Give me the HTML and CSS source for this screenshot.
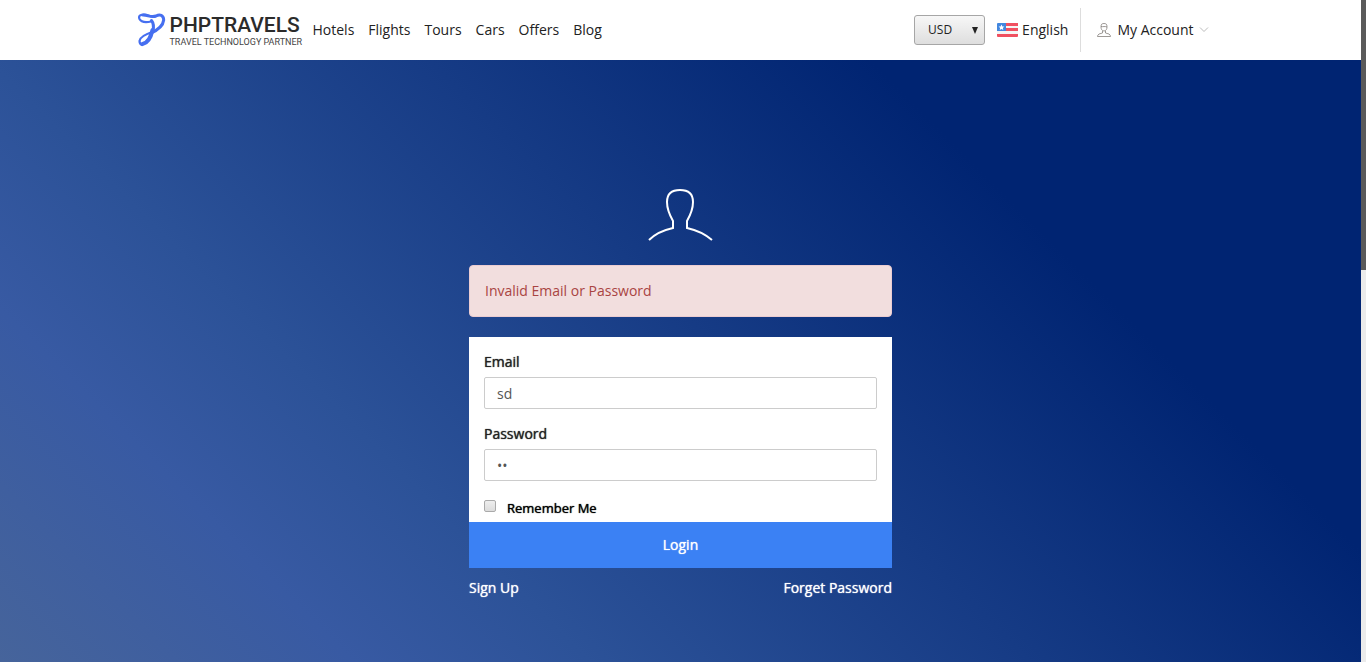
FILE: index.html
```html
<!DOCTYPE html>
<html lang="en">
<head>
<meta charset="utf-8">
<title>Login</title>
<link rel="stylesheet" href="styles.css">
</head>
<body>
<div class="page">
  <header class="header">
    <div class="header-inner">
      <a class="logo" href="#">
        <svg class="logo-mark" viewBox="0 0 28 34" aria-hidden="true">
          <g fill="none" stroke="#466ff0" stroke-linecap="round" stroke-linejoin="round">
            <path stroke-width="2.200" d="M13 8.500C8 9.500 3 9 1.500 6C0 2.500 3 1.500 6.500 1.600C11 2 14 5 18 3"/>
            <path stroke-width="3" d="M5 2C10 2 13 5 18 3C22 1 25.500 2 25.700 7C25 14 18 18 12 20.500"/>
            <path stroke-width="2.200" d="M15 19C8 21 2 24 1.500 28Q1.500 31 4 32"/>
            <path stroke-width="3" d="M13.500 7.500C15.500 10 16 13 15 18"/>
            <path stroke-width="4" d="M14.500 17C13 24 9.500 30 4.500 31"/>
          </g>
        </svg>
        <span class="logo-words"><span class="logo-name">PHPTRAVELS</span><span class="logo-tag">TRAVEL TECHNOLOGY PARTNER</span></span>
      </a>
      <nav class="nav">
        <a href="#">Hotels</a><a href="#">Flights</a><a href="#">Tours</a><a href="#">Cars</a><a href="#">Offers</a><a href="#">Blog</a>
      </nav>
      <div class="tools">
        <div class="currency">
          <select class="currency-select" aria-label="Currency"><option>USD</option></select>
          <svg class="currency-arrow" viewBox="0 0 6 7" aria-hidden="true"><path d="M0 0h6L3 7z" fill="#222"/></svg>
        </div>
        <a class="language" href="#">
          <svg class="flag" viewBox="0 0 21 14" aria-hidden="true">
            <rect width="21" height="14" rx="1" fill="#f5f5f5"/>
            <path fill="#f05060" d="M9 0h12v3H9zM9 5h12v3H9zM0 11h21v2q0 1-1 1H1q-1 0-1-1z"/>
            <path fill="#f05060" d="M0 7h21v1H0z"/>
            <path fill="#4287df" d="M1 0h8v8H0V1q0-1 1-1z"/>
            <path fill="#fff" d="M4.500 1.500l.9 1.900 2 .2-1.500 1.400.4 2-1.800-1-1.800 1 .4-2L1.600 3.600l2-.2z"/>
          </svg>
          English</a>
        <a class="account" href="#">
          <svg class="account-icon" viewBox="0 0 14 14" fill="none" stroke="#85807c" aria-hidden="true">
            <path d="M4 4C4 1 5 .5 7 .5S10 1 10 4C10 6 9 8 7 8S4 6 4 4zM4 3.500C6 4 8 3 10 4M5.500 8v2L2 11Q.5 12 .5 13.500h13Q13.500 12 12 11L8.500 10V8" stroke-width=".8"/>
          </svg>
          My Account
          <svg class="chevron" viewBox="0 0 10 6" fill="none" stroke="#bbb" aria-hidden="true"><path d="M1 .5l4 4 4-4"/></svg>
        </a>
      </div>
    </div>
  </header>
  <main class="main">
    <form class="login">
      <svg class="avatar" viewBox="0 0 66 54" fill="none" stroke="#fff" stroke-width="2" aria-hidden="true">
        <path d="M1 52C7 46 16 42 25 40V33C21 26 19 21 19 14C19 6 24 2 32 2S45 6 45 14C45 21 43 26 39 33V40C48 42 57 46 64 52"/>
      </svg>
      <div class="alert" role="alert">Invalid Email or Password</div>
      <div class="panel">
        <label class="label" for="email">Email</label>
        <input class="field" id="email" type="text" value="sd">
        <label class="label" for="password">Password</label>
        <input class="field" id="password" type="password" value="sd">
        <div class="remember">
          <input class="check" id="remember" type="checkbox">
          <label class="remember-label" for="remember">Remember Me</label>
        </div>
      </div>
      <button class="submit" type="button">Login</button>
      <div class="links"><a href="#">Sign Up</a><a href="#">Forget Password</a></div>
    </form>
  </main>
</div>
<div class="scroll-track" aria-hidden="true"><div class="scroll-thumb"></div></div>
</body>
</html>
```
FILE: styles.css
```css
* { box-sizing: border-box; }
body {
  margin: 0;
  min-height: 100vh;
  display: flex;
  font: 14px/20px "Open Sans", sans-serif;
  color: #222;
}
a { color: inherit; text-decoration: none; }
.page { flex: 1; display: flex; flex-direction: column; }
.header { background: #fff; }
.header-inner {
  max-width: 1086px;
  height: 60px;
  margin: 0 auto;
  display: flex;
  align-items: center;
}
.logo { display: flex; align-items: center; gap: 4px; }
.logo-mark { width: 28px; height: 34px; }
.logo-words { display: flex; flex-direction: column; width: 129px; white-space: nowrap; }
.logo-name { font: 500 21px/24px Roboto, sans-serif; color: #2b2b2b; }
.logo-tag { font: 9px/10px Roboto, sans-serif; color: #444; }
.nav { display: flex; gap: 14px; margin-left: 14px; }
.tools { display: flex; align-items: center; margin-left: auto; padding-right: 15px; }
.currency { display: grid; align-items: center; }
.currency-select {
  grid-area: 1 / 1;
  appearance: none;
  width: 71px;
  height: 30px;
  padding: 0 13px;
  border: 1px solid #a6a6a6;
  border-radius: 3px;
  background: linear-gradient(#f7f7f7, #dedede);
  font: 12px/20px "Open Sans", sans-serif;
  color: #222;
}
.currency-arrow { grid-area: 1 / 1; justify-self: end; width: 6px; height: 7px; margin-right: 7px; pointer-events: none; }
.language { display: flex; align-items: center; gap: 4px; margin-left: 12px; }
.flag { width: 21px; height: 14px; }
.account {
  display: flex;
  align-items: center;
  height: 44px;
  margin-left: 12px;
  padding-left: 16px;
  border-left: 1px solid #ddd;
  gap: 6px;
}
.account-icon { width: 14px; height: 14px; }
.chevron { width: 10px; height: 6px; margin-left: -1px; }
.main {
  flex: 1;
  display: flex;
  justify-content: center;
  align-items: flex-start;
  padding: 128px 16px 64px;
  background: linear-gradient(45deg, #46649b 0%, #385aa3 18%, #2c5298 30%, #002472 75%, #002472 100%);
}
.login { width: 100%; max-width: 423px; display: flex; flex-direction: column; }
.avatar { align-self: center; width: 66px; height: 54px; }
.alert {
  margin: 23px 0 20px;
  padding: 15px;
  border: 1px solid #ebccd1;
  border-radius: 4px;
  background: #f2dede;
  color: #a94442;
}
.panel { display: flex; flex-direction: column; padding: 15px 15px 3px; background: #fff; }
.label { margin-bottom: 5px; }
.label, .remember-label, .submit, .links { text-shadow: 0 0 1px currentColor; }
.field {
  width: 100%;
  height: 32px;
  margin-bottom: 15px;
  padding: 0 12px;
  border: 1px solid #ccc;
  border-radius: 2px;
  background: #fff;
  font: 14px/20px "Open Sans", sans-serif;
  color: #555;
}
.remember { display: flex; align-items: center; gap: 11px; height: 23px; }
.check {
  appearance: none;
  width: 12px;
  height: 12px;
  margin: 0 0 4px;
  border: 1px solid #aaa;
  border-radius: 2px;
  background: linear-gradient(#eee, #dcdcdc);
}
.remember-label { font-size: 13px; color: #000; }
.submit {
  height: 46px;
  border: 0;
  background: #3b81f4;
  font: 14px/20px "Open Sans", sans-serif;
  color: #fff;
}
.links { display: flex; justify-content: space-between; margin-top: 10px; color: #fff; }
.scroll-track { width: 5px; background: #ebebeb; }
.scroll-thumb { height: 270px; background: #5a5a5a; }
```
